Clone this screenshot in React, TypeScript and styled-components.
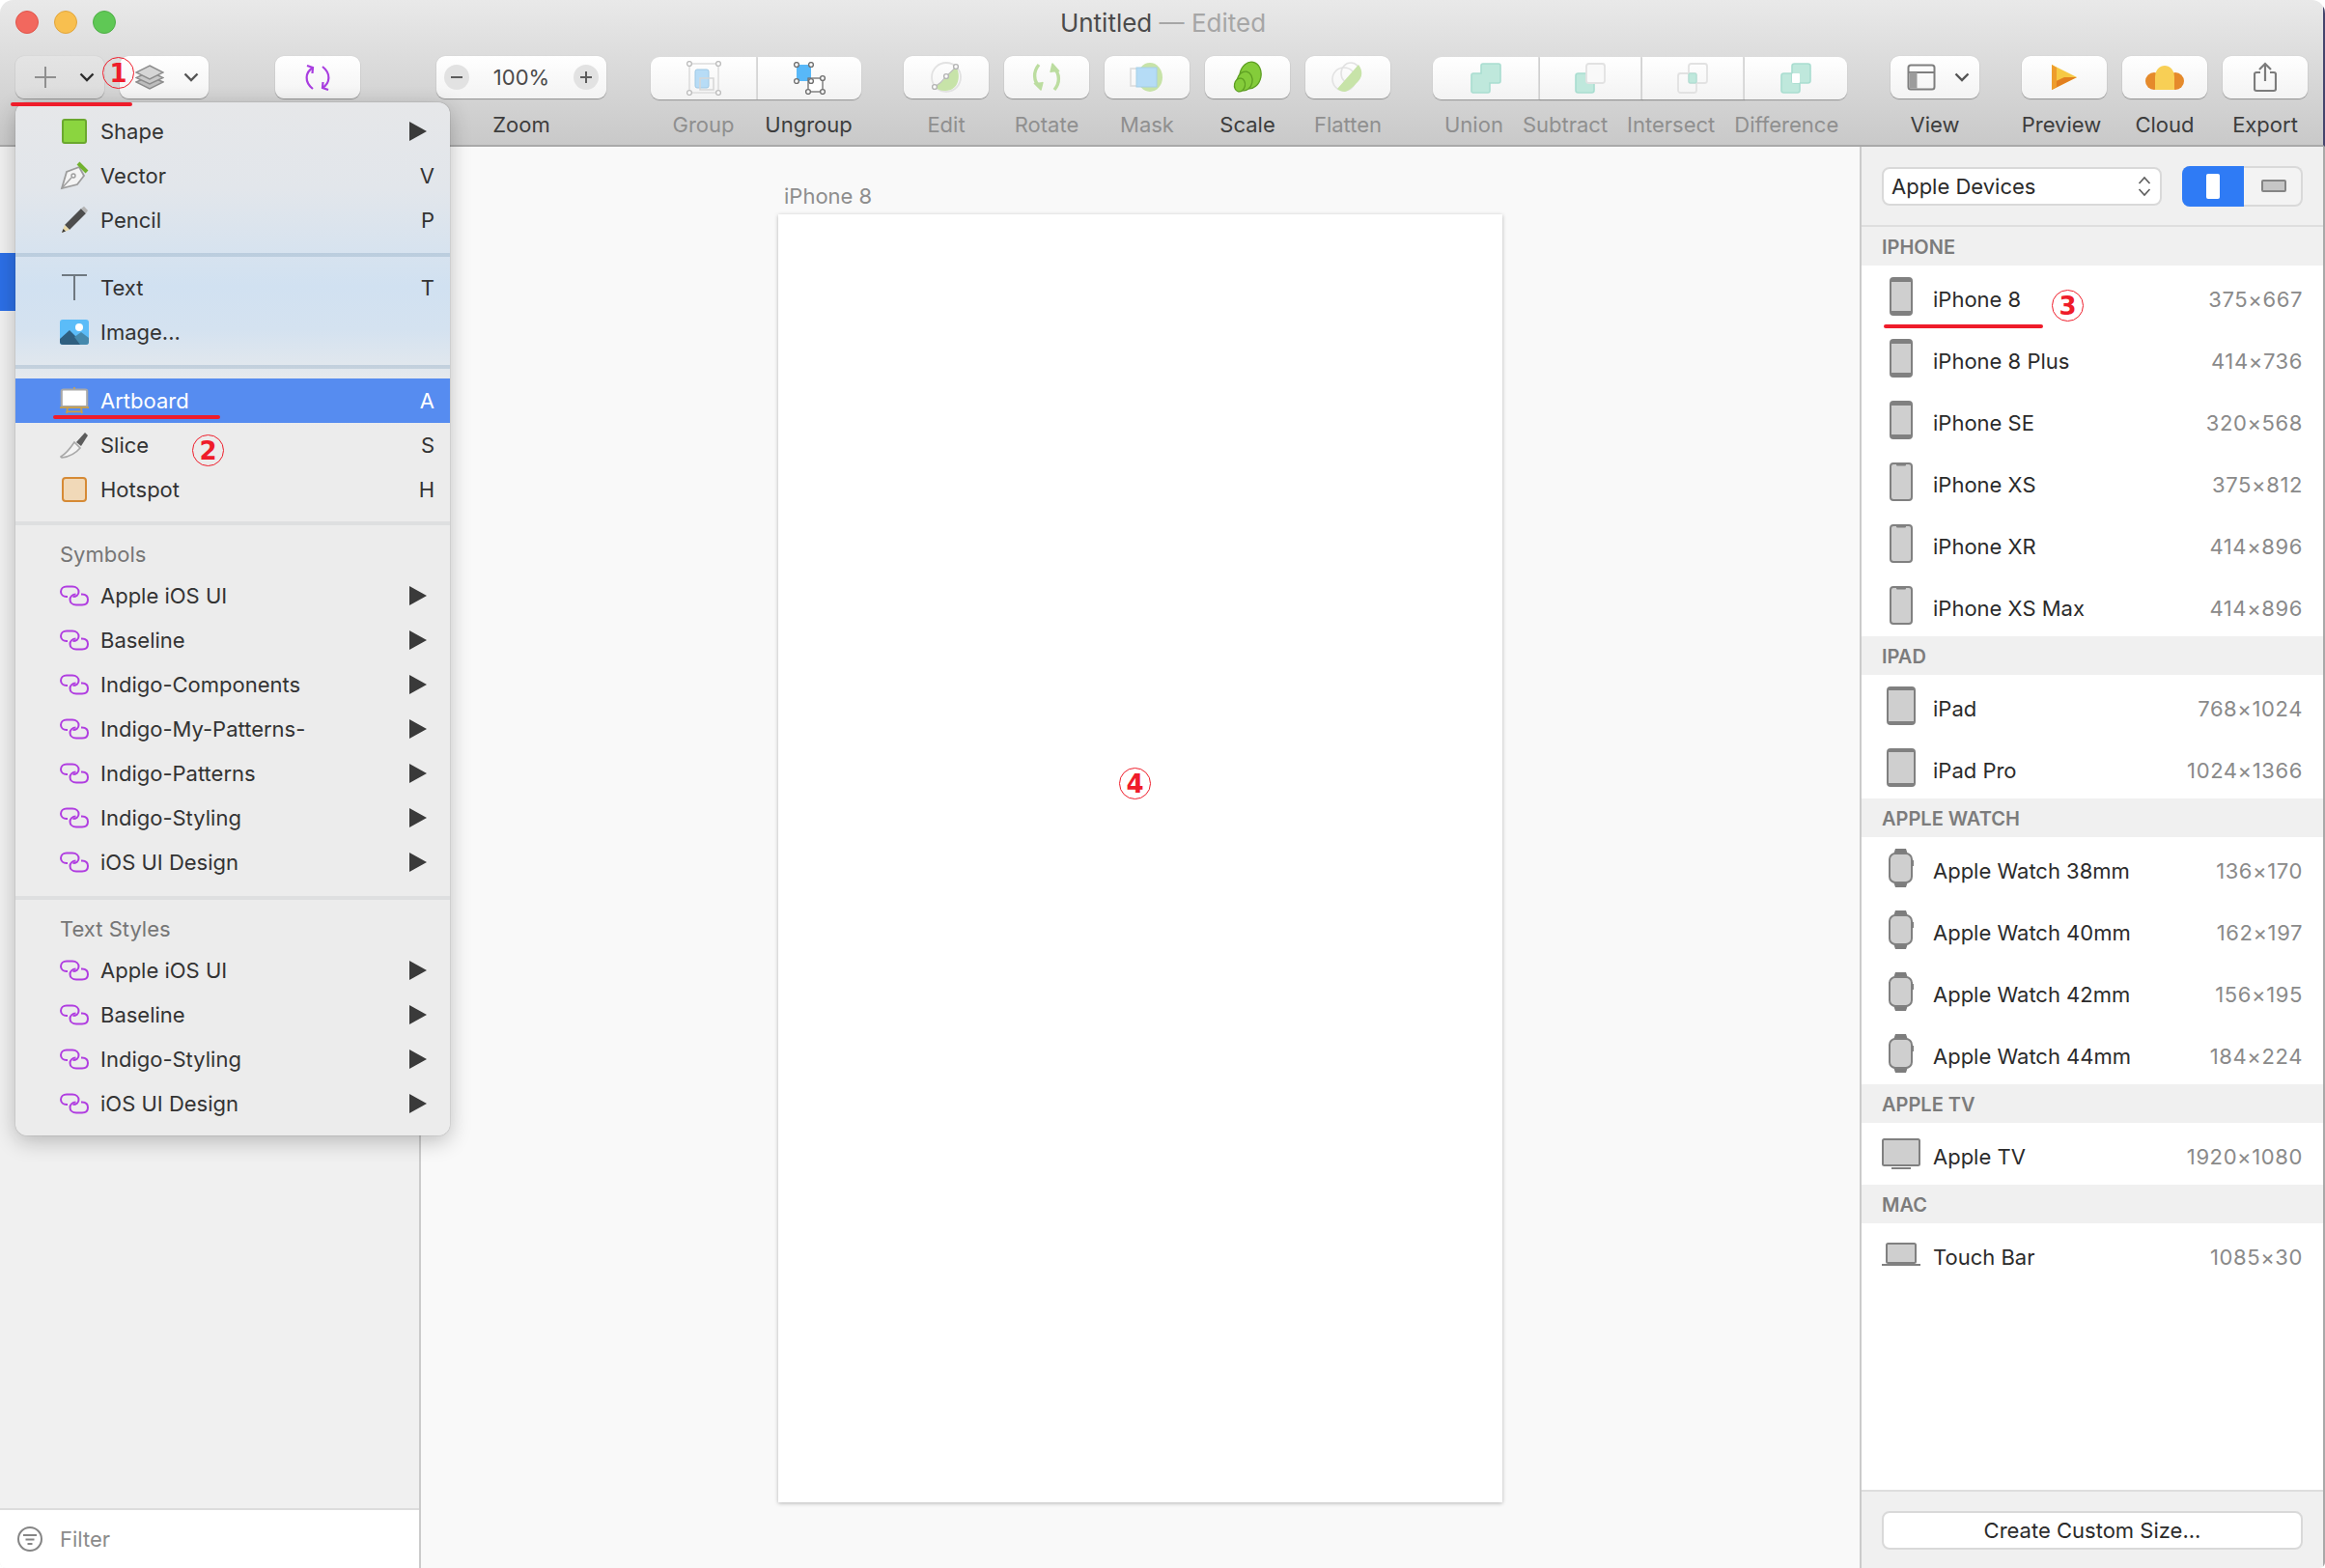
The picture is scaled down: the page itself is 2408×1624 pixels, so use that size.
import React from 'react';
import styled, { createGlobalStyle } from 'styled-components';

const FONT = `Inter, "Liberation Sans", sans-serif`;

const GlobalStyle = createGlobalStyle`
  html, body {
    margin: 0;
    padding: 0;
    background: #ffffff;
  }
  body {
    font-family: ${FONT};
    -webkit-font-smoothing: antialiased;
  }
`;

const Win = styled.div`
  position: relative;
  width: 2408px;
  height: 1624px;
  overflow: hidden;
  display: flex;
  flex-direction: column;
  border-radius: 14px 14px 6px 6px;
  background: #f9f9f9;
`;

const Toolbar = styled.header`
  height: 150px;
  flex-shrink: 0;
  border-bottom: 2px solid #a9a9a9;
  border-right: 2px solid #45456c;
  background: linear-gradient(180deg, #e9e9e9 0%, #c9c9c9 100%);
`;

const TitleBar = styled.div`
  height: 46px;
  padding: 0 16px;
  display: grid;
  grid-template-columns: 1fr auto 1fr;
  align-items: center;
`;

const Lights = styled.div`
  display: flex;
  gap: 16px;
`;

const Light = styled.span<{ $fill: string; $edge: string }>`
  width: 24px;
  height: 24px;
  border-radius: 50%;
  box-sizing: border-box;
  background: ${({ $fill }) => $fill};
  border: 1px solid ${({ $edge }) => $edge};
`;

const Title = styled.div`
  margin-left: 3px;
  font-size: 26px;
  color: #4b4b4b;
  white-space: nowrap;
`;

const TitleFaded = styled.span`
  color: #a6a6a6;
`;

const ToolRow = styled.div`
  display: flex;
  padding: 12px 16px 0;
`;

const Tool = styled.div<{ $w: number; $ml?: number }>`
  width: ${({ $w }) => $w}px;
  margin-left: ${({ $ml }) => $ml ?? 0}px;
  flex-shrink: 0;
  display: flex;
  flex-direction: column;
  align-items: center;
`;

const ToolButton = styled.div<{ $pressed?: boolean }>`
  width: 100%;
  height: 44px;
  border-radius: 9px;
  display: flex;
  align-items: center;
  justify-content: center;
  background: ${({ $pressed }) =>
    $pressed
      ? 'linear-gradient(180deg, #e4e4e4, #dcdcdc)'
      : 'linear-gradient(180deg, #ffffff, #f3f3f3)'};
  box-shadow: 0 1px 1px rgba(0, 0, 0, 0.3), 0 0 1px rgba(0, 0, 0, 0.18);
`;

const ComboButton = styled(ToolButton)<{ $pl: number }>`
  justify-content: space-between;
  box-sizing: border-box;
  padding: 0 10px 0 ${({ $pl }) => $pl}px;
`;

const ToolLabel = styled.div<{ $off?: boolean; $nudge?: number }>`
  margin-top: 14px;
  margin-right: ${({ $nudge }) => $nudge ?? 0}px;
  font-size: 22px;
  line-height: 26px;
  white-space: nowrap;
  color: ${({ $off }) => ($off ? '#8f8f8f' : '#3d3d3d')};
`;

const Segments = styled.div<{ $ml: number }>`
  margin-left: ${({ $ml }) => $ml}px;
  display: flex;
  flex-shrink: 0;
`;

const Segment = styled.div<{ $w: number }>`
  width: ${({ $w }) => $w}px;
  display: flex;
  flex-direction: column;
  align-items: center;
`;

const SegmentFace = styled.div<{ $first?: boolean; $last?: boolean; $w?: number }>`
  width: ${({ $w }) => ($w ? `${$w}px` : '100%')};
  height: 44px;
  box-sizing: border-box;
  margin-top: 1px;
  margin-bottom: -1px;
  display: flex;
  align-items: center;
  justify-content: center;
  background: linear-gradient(180deg, #ffffff, #f3f3f3);
  box-shadow: 0 1px 1px rgba(0, 0, 0, 0.3);
  border-right: ${({ $last }) => ($last ? 'none' : '2px solid #dcdcdc')};
  border-radius: ${({ $first, $last }) =>
    `${$first ? 9 : 0}px ${$last ? 9 : 0}px ${$last ? 9 : 0}px ${$first ? 9 : 0}px`};
`;

const BooleanGroup = styled.div`
  margin-left: 44px;
  flex-shrink: 0;
  width: 429px;
  display: flex;
  flex-direction: column;
`;

const BooleanFaces = styled.div`
  display: flex;
`;

const BooleanLabels = styled.div`
  display: flex;
  gap: 20px;
  padding-left: 12px;
`;

const ZoomFace = styled(ToolButton)`
  justify-content: space-between;
  padding: 0 8px;
  box-sizing: border-box;
  font-size: 22px;
  color: #4a4a4a;
`;

const ZoomKnob = styled.span`
  width: 26px;
  height: 26px;
  border-radius: 50%;
  background: #e2e2e2;
  color: #5c5c5c;
  display: flex;
  align-items: center;
  justify-content: center;
`;

const Body = styled.div`
  flex: 1;
  min-height: 0;
  display: flex;
`;

const Sidebar = styled.aside`
  width: 434px;
  flex-shrink: 0;
  display: flex;
  flex-direction: column;
  background: #f0f0f0;
  border-right: 2px solid #cbcbcb;
`;

const LayerList = styled.div`
  flex: 1;
  padding-top: 110px;
`;

const SelectedLayer = styled.div`
  height: 60px;
  background: #2c6fe6;
`;

const FilterBar = styled.div`
  height: 60px;
  border-top: 2px solid #dcdcdc;
  background: #ffffff;
  padding-left: 18px;
  display: flex;
  align-items: center;
  gap: 18px;
  font-size: 22px;
  color: #8b8b8b;
`;

const Canvas = styled.main`
  flex: 1;
  min-width: 0;
  padding: 38px 0 0 370px;
  background: #f9f9f9;
`;

const ArtboardLabel = styled.div`
  margin-left: 6px;
  height: 32px;
  font-size: 22px;
  line-height: 26px;
  color: #8e8e8e;
`;

const Artboard = styled.div`
  width: 750px;
  height: 1334px;
  background: #ffffff;
  box-shadow: 0 1px 4px rgba(0, 0, 0, 0.28);
`;

const Panel = styled.aside`
  width: 478px;
  flex-shrink: 0;
  display: flex;
  flex-direction: column;
  background: #f0f0f0;
  border-left: 2px solid #cbcbcb;
  border-right: 2px solid #a8a8a8;
`;

const PanelTop = styled.div`
  height: 81px;
  flex-shrink: 0;
  box-sizing: content-box;
  border-bottom: 2px solid #dedede;
  padding: 0 21px;
  display: flex;
  align-items: center;
  justify-content: space-between;
`;

const DeviceSelect = styled.div`
  width: 290px;
  height: 40px;
  box-sizing: border-box;
  padding: 1px 9px 0 8px;
  border: 2px solid #d9d9d9;
  border-radius: 8px;
  background: #ffffff;
  display: flex;
  align-items: center;
  justify-content: space-between;
  font-size: 22px;
  color: #2a2a2a;
`;

const Orientation = styled.div`
  width: 125px;
  height: 42px;
  display: flex;
  border-radius: 8px;
  background: #f3f3f3;
  box-shadow: inset 0 0 0 2px #d9d9d9;
`;

const OrientationCell = styled.div<{ $on?: boolean }>`
  flex: ${({ $on }) => ($on ? '0 0 64px' : 1)};
  border-radius: 8px 0 0 8px;
  background: ${({ $on }) => ($on ? '#2f7bf5' : 'transparent')};
  display: flex;
  align-items: center;
  justify-content: center;
`;

const PortraitMark = styled.span`
  width: 14px;
  height: 26px;
  border-radius: 2px;
  background: #ffffff;
`;

const LandscapeMark = styled.span`
  width: 26px;
  height: 13px;
  box-sizing: border-box;
  border-radius: 2px;
  background: #c6c6c6;
  border: 2px solid #858585;
`;

const DeviceList = styled.div`
  flex: 1;
  min-height: 0;
  background: #ffffff;
`;

const SectionHead = styled.div`
  height: 38px;
  padding: 2px 21px 0;
  background: #f0f0f0;
  display: flex;
  align-items: center;
  font-size: 20px;
  font-weight: 600;
  color: #7c7c7c;
`;

const DeviceRow = styled.div`
  height: 64px;
  padding: 0 21px;
  display: flex;
  align-items: center;
`;

const DeviceIcon = styled.span`
  width: 40px;
  margin-right: 13px;
  display: flex;
  justify-content: center;
`;

const DeviceName = styled.span`
  flex: 1;
  margin-top: 5px;
  font-size: 22px;
  color: #2b2b2b;
`;

const DeviceSize = styled.span`
  margin-top: 5px;
  font-size: 22px;
  letter-spacing: 0.6px;
  color: #8a8a8a;
`;

const PanelFooter = styled.div`
  height: 59px;
  flex-shrink: 0;
  border-top: 2px solid #dedede;
  padding: 20px 21px 0;
  box-sizing: content-box;
`;

const CustomButton = styled.div`
  height: 40px;
  box-sizing: border-box;
  border-radius: 8px;
  border: 2px solid #d9d9d9;
  background: #ffffff;
  display: flex;
  align-items: center;
  justify-content: center;
  font-size: 22px;
  color: #2b2b2b;
`;

const Menu = styled.nav`
  position: absolute;
  left: 16px;
  top: 106px;
  width: 450px;
  height: 1070px;
  box-sizing: border-box;
  padding-top: 7px;
  border-radius: 12px;
  background: linear-gradient(
    180deg,
    #e6e7e9 0,
    #e2e6eb 90px,
    #d1e1f1 190px,
    #d4e2f0 235px,
    #e5e9ed 285px,
    #ececec 340px,
    #ececec 100%
  );
  box-shadow: 0 0 1px rgba(0, 0, 0, 0.55), 0 6px 22px rgba(0, 0, 0, 0.24);
`;

const MenuRow = styled.div<{ $active?: boolean }>`
  height: 46px;
  padding: 0 16px 0 46px;
  display: flex;
  align-items: center;
  font-size: 22px;
  color: ${({ $active }) => ($active ? '#ffffff' : '#333333')};
  background: ${({ $active }) => ($active ? '#568cf0' : 'transparent')};
`;

const MenuIcon = styled.span`
  width: 30px;
  margin-right: 12px;
  display: flex;
  justify-content: center;
`;

const MenuText = styled.span`
  flex: 1;
`;

const MenuSeparator = styled.div<{ $before: number; $after: number; $tint?: boolean }>`
  height: 4px;
  margin: ${({ $before, $after }) => `${$before}px 0 ${$after}px`};
  background: ${({ $tint }) => ($tint ? 'rgba(120, 150, 180, 0.28)' : '#dedfe0')};
`;

const MenuHeading = styled.div`
  height: 40px;
  padding-left: 46px;
  display: flex;
  align-items: center;
  font-size: 22px;
  color: #767676;
`;

const Arrow = styled.span`
  width: 0;
  height: 0;
  margin-right: 8px;
  border-left: 18px solid #3a3a3a;
  border-top: 10px solid transparent;
  border-bottom: 10px solid transparent;
`;

const RedLine = styled.div<{ $x: number; $y: number; $w: number }>`
  position: absolute;
  left: ${({ $x }) => $x}px;
  top: ${({ $y }) => $y}px;
  width: ${({ $w }) => $w}px;
  height: 4px;
  border-radius: 2px;
  background: #ef1c2a;
`;

const Badge = styled.div<{ $x: number; $y: number }>`
  position: absolute;
  left: ${({ $x }) => $x - 16}px;
  top: ${({ $y }) => $y - 16}px;
  width: 33px;
  height: 33px;
  box-sizing: border-box;
  border: 1px solid #ef1c2a;
  border-radius: 50%;
  display: flex;
  align-items: center;
  justify-content: center;
  font-family: "DejaVu Sans", sans-serif;
  font-weight: 700;
  font-size: 26px;
  line-height: 1;
  color: #ef1c2a;
`;

const Chevron = ({ color = '#3a3a3a' }: { color?: string }) => (
  <svg width="16" height="10" viewBox="0 0 16 10" fill="none">
    <path d="M1.5 1.5 8 8l6.5-6.5" stroke={color} strokeWidth="2.4" />
  </svg>
);

const PlusIcon = () => (
  <svg width="24" height="24" viewBox="0 0 24 24">
    <path d="M12 1v22M1 12h22" stroke="#8f8f8f" strokeWidth="2" />
  </svg>
);

const LayersIcon = () => (
  <svg width="30" height="26" viewBox="0 0 30 26" fill="#d6d6d6" stroke="#8d8d8d" strokeWidth="1.5">
    <path d="M15 12 29 18 15 25 1 18Z" fill="#bdbdbd" />
    <path d="M15 7 29 13.5 15 20 1 13.5Z" fill="#c9c9c9" />
    <path d="M15 1 29 8 15 15 1 8Z" />
  </svg>
);

const SyncIcon = () => (
  <svg width="28" height="27" viewBox="0 0 28 27" fill="none" stroke="#a93ee0" strokeWidth="2.2">
    <path d="M9 3C1 8 0 18 9 25" />
    <path d="M3 1 9 3 8.500 9" />
    <path d="M19 24C27 19 28 9 19 2" />
    <path d="M25 26 19 24 19.500 18" />
  </svg>
);

const Handles = ({ points, color }: { points: number[][]; color: string }) => (
  <>
    {points.map(([cx, cy]) => (
      <circle key={`${cx}-${cy}`} cx={cx} cy={cy} r="2.4" fill="#ffffff" stroke={color} strokeWidth="1.4" />
    ))}
  </>
);

const GroupIcon = () => (
  <svg width="36" height="36" viewBox="0 0 36 36" fill="none">
    <rect x="3" y="3" width="30" height="30" stroke="#dcdcdc" strokeWidth="1.5" />
    <rect x="9" y="9" width="14" height="19" rx="2" fill="#b7dcf6" stroke="#9ec8e4" />
    <rect x="14" y="18" width="14" height="12" stroke="#d6d6d6" strokeWidth="1.5" />
    <Handles points={[[3, 3], [33, 3], [3, 33], [33, 33]]} color="#bdbdbd" />
  </svg>
);

const UngroupIcon = () => (
  <svg width="34" height="34" viewBox="0 0 34 34" fill="none">
    <rect x="3" y="3" width="15" height="17" rx="2" fill="#58b8f8" />
    <rect x="15" y="17" width="15" height="14" fill="#ffffff" stroke="#6f6f6f" strokeWidth="1.3" />
    <Handles points={[[3, 3], [18, 3], [3, 20], [18, 20], [30, 17], [15, 31], [30, 31]]} color="#6f6f6f" />
  </svg>
);

const EditIcon = () => (
  <svg width="34" height="32" viewBox="0 0 34 32" fill="none">
    <ellipse cx="17" cy="16" rx="15" ry="15" stroke="#e2e2e2" strokeWidth="1.8" />
    <path d="M27 5C33 14 30 31 15 30 11 30 7 28 5 26 11 22 15 19 17 15Z" fill="#c7e3a8" />
    <path d="M5 26C10 23 14 19 17 15 21 11 25 8 27 5" stroke="#bcbcbc" strokeWidth="1.2" />
    <Handles points={[[27, 5], [17, 15], [5, 26]]} color="#b4b4b4" />
  </svg>
);

const RotateIcon = () => (
  <svg width="32" height="32" viewBox="0 0 32 32" fill="none" stroke="#bcdda0" strokeWidth="3.4" strokeLinejoin="round">
    <path d="M8 3C2 10 2 20 9 26" />
    <path d="M3 22 10 29 12 21" fill="#bcdda0" strokeWidth="1.5" />
    <path d="M24 29C30 22 30 12 23 6" />
    <path d="M29 10 22 2 20 11" fill="#bcdda0" strokeWidth="1.5" />
  </svg>
);

const MaskIcon = () => (
  <svg width="36" height="32" viewBox="0 0 36 32" fill="none">
    <rect x="1" y="7" width="23" height="18" stroke="#dddddd" strokeWidth="1.6" />
    <ellipse cx="21" cy="16" rx="13" ry="15" fill="#c7e3a8" />
    <rect x="7" y="6" width="21" height="20" fill="#b5dcf6" stroke="#a6cfe6" />
  </svg>
);

const ScaleIcon = () => (
  <svg width="32" height="34" viewBox="0 0 32 34" fill="#84cc3a" stroke="#5d9e22" strokeWidth="1.3">
    <ellipse cx="19" cy="15" rx="11" ry="14" transform="rotate(12 19 15)" />
    <ellipse cx="13" cy="21" rx="8" ry="10" transform="rotate(12 13 21)" />
    <ellipse cx="8" cy="25" rx="5.5" ry="7" transform="rotate(12 8 25)" />
  </svg>
);

const FlattenIcon = () => (
  <svg width="34" height="32" viewBox="0 0 34 32" fill="none">
    <circle cx="13" cy="18" r="12" stroke="#e2e2e2" strokeWidth="1.6" />
    <ellipse cx="20" cy="12" rx="10" ry="11" stroke="#e2e2e2" strokeWidth="1.6" />
    <path d="M28 3C33 10 32 16 27 21 23 25 20 29 14 31 11 31 8 30 6 28Z" fill="#c7e3a8" />
  </svg>
);

const TEAL = '#bfe8dc';
const TEAL_EDGE = '#a9ddd0';
const GHOST = '#e2e2e2';

const UnionIcon = () => (
  <svg width="32" height="32" viewBox="0 0 32 32">
    <path d="M13 1h16a2 2 0 0 1 2 2v16a2 2 0 0 1-2 2H20v8a2 2 0 0 1-2 2H3a2 2 0 0 1-2-2V13a2 2 0 0 1 2-2h8V3a2 2 0 0 1 2-2Z" fill={TEAL} stroke={TEAL_EDGE} strokeWidth="1.6" />
  </svg>
);

const SubtractIcon = () => (
  <svg width="32" height="32" viewBox="0 0 32 32">
    <rect x="1" y="11" width="19" height="20" rx="2.5" fill={TEAL} stroke={TEAL_EDGE} strokeWidth="1.6" />
    <rect x="12" y="1" width="19" height="20" rx="2.5" fill="#f9f9f9" stroke={GHOST} strokeWidth="1.8" />
  </svg>
);

const IntersectIcon = () => (
  <svg width="32" height="32" viewBox="0 0 32 32" fill="none">
    <rect x="1" y="11" width="19" height="20" rx="2.5" stroke={GHOST} strokeWidth="1.8" />
    <rect x="12" y="1" width="19" height="20" rx="2.5" stroke={GHOST} strokeWidth="1.8" />
    <rect x="12" y="11" width="8" height="10" rx="1" fill={TEAL} stroke={TEAL_EDGE} />
  </svg>
);

const DifferenceIcon = () => (
  <svg width="32" height="32" viewBox="0 0 32 32">
    <rect x="1" y="11" width="19" height="20" rx="2.5" fill={TEAL} stroke={TEAL_EDGE} strokeWidth="1.6" />
    <rect x="12" y="1" width="19" height="20" rx="2.5" fill={TEAL} stroke={TEAL_EDGE} strokeWidth="1.6" />
    <rect x="12" y="11" width="8" height="10" rx="1" fill="#ffffff" />
  </svg>
);

const ViewIcon = () => (
  <svg width="30" height="28" viewBox="0 0 30 28" fill="none">
    <rect x="1.5" y="1.5" width="27" height="25" rx="2.5" stroke="#7f7f7f" strokeWidth="2" />
    <path d="M2 9h26" stroke="#7f7f7f" strokeWidth="2" />
    <rect x="2.5" y="9" width="8" height="16.5" fill="#9c9c9c" />
  </svg>
);

const PreviewIcon = () => (
  <svg width="28" height="28" viewBox="0 0 28 28">
    <path d="M1 1 27 14 1 27Z" fill="#f6c944" />
    <path d="M1 27 27 14H14L1 20Z" fill="#e27f1f" />
    <path d="M1 1 6 4V24L1 27Z" fill="#ee9d2d" />
  </svg>
);

const CloudIcon = () => (
  <svg width="40" height="26" viewBox="0 0 40 26">
    <ellipse cx="9" cy="17" rx="9" ry="9" fill="#e58a2b" />
    <ellipse cx="31" cy="17" rx="9" ry="9" fill="#e58a2b" />
    <path d="M10 26V13C10 5 15 1 20 1s10 4 10 12v13Z" fill="#f8cf55" />
  </svg>
);

const ExportIcon = () => (
  <svg width="24" height="32" viewBox="0 0 24 32" fill="none" stroke="#7c7c7c" strokeWidth="2.2">
    <path d="M7 11H3a2 2 0 0 0-2 2v15a2 2 0 0 0 2 2h18a2 2 0 0 0 2-2V13a2 2 0 0 0-2-2h-4" />
    <path d="M12 20V2M6 8l6-6 6 6" />
  </svg>
);

const ShapeGlyph = () => (
  <svg width="26" height="26" viewBox="0 0 26 26">
    <rect x="1" y="1" width="24" height="24" rx="2" fill="#8bd53f" stroke="#6ba82e" strokeWidth="2" />
  </svg>
);

const PenGlyph = () => (
  <svg width="30" height="30" viewBox="0 0 30 30" fill="none">
    <path d="M2 28 7 11 20 6 25 15 18 24Z" fill="#f4f4f4" stroke="#9d9d9d" strokeWidth="1.8" />
    <path d="M2 28 12 17" stroke="#9d9d9d" strokeWidth="1.4" />
    <circle cx="14" cy="15" r="2" stroke="#9d9d9d" strokeWidth="1.4" />
    <path d="M19 2 28 11" stroke="#71b22e" strokeWidth="4" />
  </svg>
);

const PencilGlyph = () => (
  <svg width="30" height="30" viewBox="0 0 30 30" fill="none">
    <path d="M5 20 22 3l5 5L10 25Z" fill="#4d4d4d" />
    <path d="M22 3 25 0.8 29 5 27 8Z" fill="#b3b3b3" />
    <path d="M5 20 10 25 2 28Z" fill="#e8d8a8" />
    <path d="M2 28 3.5 24 6 26.5Z" fill="#3a3a3a" />
  </svg>
);

const TextGlyph = () => (
  <svg width="28" height="28" viewBox="0 0 28 28">
    <path d="M1 1h26M14 1v26" stroke="#6f7880" strokeWidth="2" />
  </svg>
);

const ImageGlyph = () => (
  <svg width="30" height="26" viewBox="0 0 30 26">
    <rect width="30" height="26" rx="3" fill="#5bbcf8" />
    <circle cx="20" cy="8" r="4" fill="#ffffff" />
    <path d="M0 23V20L10 11 21 22 23 26H3a3 3 0 0 1-3-3Z" fill="#2f5f80" />
    <path d="M15 18 22 13 30 19V23a3 3 0 0 1-3 3H21Z" fill="#4589ad" />
  </svg>
);

const ArtboardGlyph = () => (
  <svg width="34" height="32" viewBox="0 0 34 32" fill="none">
    <path d="M17 0v3" stroke="#c9a04a" strokeWidth="2" />
    <rect x="2" y="3" width="30" height="20" rx="2" fill="#ffffff" stroke="#a8a8a8" strokeWidth="2.4" />
    <path d="M0 24h34" stroke="#c9a04a" strokeWidth="2" />
    <path d="M9 24 8 31M25 24l1 7M8 29h18" stroke="#c9a04a" strokeWidth="2" />
  </svg>
);

const SliceGlyph = () => (
  <svg width="30" height="28" viewBox="0 0 30 28">
    <path d="M2 27C10 26 16 23 21 17L15 11C11 17 6 23 1 26Z" fill="#f4f4f4" stroke="#a8a8a8" strokeWidth="1.6" />
    <path d="M17 11 26 1 29 4 22 15Z" fill="#5c5c5c" />
  </svg>
);

const HotspotGlyph = () => (
  <svg width="26" height="26" viewBox="0 0 26 26">
    <rect x="1" y="1" width="24" height="24" rx="3" fill="#f1d9b8" stroke="#d68a35" strokeWidth="2" />
  </svg>
);

const LinkGlyph = () => (
  <svg width="30" height="22" viewBox="0 0 30 22" fill="none" stroke="#b03de0" strokeWidth="2">
    <path d="M8 12H7C3.500 12 1 10 1 6.800 1 3.500 3.500 1.500 7 1.500H13C17 1.500 19.500 4 19.500 7 19.500 10 17 12 13.500 12" />
    <path d="M22 9.500H23C27 9.500 29 12 29 15 29 18 27 20.500 23 20.500H17C13 20.500 10.500 18 10.500 15 10.500 12 13 9.500 16.500 9.500" />
  </svg>
);

const SmallPhone = ({ notch, thick = true }: { notch?: boolean; thick?: boolean }) => (
  <svg width="24" height="40" viewBox="0 0 24 40">
    <rect x="1" y="1" width="22" height="38" rx="3" fill="#cfcfcf" stroke="#808080" strokeWidth="2" />
    {thick && <path d="M1 3.500h22M1 36.500h22" stroke="#808080" strokeWidth="3" />}
    {notch && <path d="M7 1h10v1.500a1 1 0 0 1-1 1H8a1 1 0 0 1-1-1Z" fill="#808080" />}
  </svg>
);

const TabletIcon = () => (
  <svg width="30" height="40" viewBox="0 0 30 40">
    <rect x="1" y="1" width="28" height="38" rx="3" fill="#cfcfcf" stroke="#808080" strokeWidth="2" />
    <path d="M1 3h28M1 37h28" stroke="#808080" strokeWidth="2" />
  </svg>
);

const WatchIcon = () => (
  <svg width="26" height="40" viewBox="0 0 26 40">
    <path d="M5 6 7 0H18L20 6ZM5 34 7 40H18L20 34Z" fill="#7d7d7d" />
    <rect x="1" y="5" width="23" height="30" rx="6" fill="#cfcfcf" stroke="#808080" strokeWidth="2" />
    <rect x="24" y="12" width="2" height="6" fill="#808080" />
  </svg>
);

const TvIcon = () => (
  <svg width="40" height="32" viewBox="0 0 40 32">
    <rect x="1" y="1" width="38" height="27" rx="1.5" fill="#cfcfcf" stroke="#808080" strokeWidth="2" />
    <path d="M10 31h20" stroke="#808080" strokeWidth="2" />
  </svg>
);

const LaptopIcon = () => (
  <svg width="40" height="24" viewBox="0 0 40 24">
    <rect x="5" y="1" width="30" height="20" rx="1.500" fill="#cfcfcf" stroke="#808080" strokeWidth="2" />
    <path d="M0 23h40" stroke="#808080" strokeWidth="2" />
  </svg>
);

const FilterIcon = () => (
  <svg width="26" height="26" viewBox="0 0 26 26" fill="none" stroke="#858585" strokeWidth="2">
    <circle cx="13" cy="13" r="12" />
    <path d="M6 9h14M8.500 13.500h9M10.500 18h5" />
  </svg>
);

const SelectArrows = () => (
  <svg width="14" height="22" viewBox="0 0 14 22" fill="none" stroke="#5c5c5c" strokeWidth="1.6">
    <path d="M1.500 8 7 2l5.500 6M1.500 14 7 20l5.500-6" />
  </svg>
);

type MenuEntry = { label: string; icon?: React.ReactNode; key?: string; more?: boolean; active?: boolean };

const drawTools: MenuEntry[] = [
  { label: 'Shape', icon: <ShapeGlyph />, more: true },
  { label: 'Vector', icon: <PenGlyph />, key: 'V' },
  { label: 'Pencil', icon: <PencilGlyph />, key: 'P' },
];

const textTools: MenuEntry[] = [
  { label: 'Text', icon: <TextGlyph />, key: 'T' },
  { label: 'Image...', icon: <ImageGlyph /> },
];

const pageTools: MenuEntry[] = [
  { label: 'Artboard', icon: <ArtboardGlyph />, key: 'A', active: true },
  { label: 'Slice', icon: <SliceGlyph />, key: 'S' },
  { label: 'Hotspot', icon: <HotspotGlyph />, key: 'H' },
];

const symbolLibs = ['Apple iOS UI', 'Baseline', 'Indigo-Components', 'Indigo-My-Patterns-', 'Indigo-Patterns', 'Indigo-Styling', 'iOS UI Design'];
const styleLibs = ['Apple iOS UI', 'Baseline', 'Indigo-Styling', 'iOS UI Design'];

const MenuRows = ({ items }: { items: MenuEntry[] }) => (
  <>
    {items.map((item) => (
      <MenuRow key={item.label} $active={item.active}>
        <MenuIcon>{item.icon}</MenuIcon>
        <MenuText>{item.label}</MenuText>
        {item.key}
        {item.more && <Arrow />}
      </MenuRow>
    ))}
  </>
);

const LibraryRows = ({ names }: { names: string[] }) => (
  <MenuRows items={names.map((label) => ({ label, icon: <LinkGlyph />, more: true }))} />
);

type Device = { name: string; size: string; icon: React.ReactNode };
type DeviceGroup = { title: string; devices: Device[] };

const deviceGroups: DeviceGroup[] = [
  {
    title: 'IPHONE',
    devices: [
      { name: 'iPhone 8', size: '375×667', icon: <SmallPhone /> },
      { name: 'iPhone 8 Plus', size: '414×736', icon: <SmallPhone /> },
      { name: 'iPhone SE', size: '320×568', icon: <SmallPhone /> },
      { name: 'iPhone XS', size: '375×812', icon: <SmallPhone notch thick={false} /> },
      { name: 'iPhone XR', size: '414×896', icon: <SmallPhone notch thick={false} /> },
      { name: 'iPhone XS Max', size: '414×896', icon: <SmallPhone notch thick={false} /> },
    ],
  },
  {
    title: 'IPAD',
    devices: [
      { name: 'iPad', size: '768×1024', icon: <TabletIcon /> },
      { name: 'iPad Pro', size: '1024×1366', icon: <TabletIcon /> },
    ],
  },
  {
    title: 'APPLE WATCH',
    devices: [
      { name: 'Apple Watch 38mm', size: '136×170', icon: <WatchIcon /> },
      { name: 'Apple Watch 40mm', size: '162×197', icon: <WatchIcon /> },
      { name: 'Apple Watch 42mm', size: '156×195', icon: <WatchIcon /> },
      { name: 'Apple Watch 44mm', size: '184×224', icon: <WatchIcon /> },
    ],
  },
  { title: 'APPLE TV', devices: [{ name: 'Apple TV', size: '1920×1080', icon: <TvIcon /> }] },
  { title: 'MAC', devices: [{ name: 'Touch Bar', size: '1085×30', icon: <LaptopIcon /> }] },
];

const App: React.FC = () => (
  <Win>
    <GlobalStyle />
    <Toolbar>
      <TitleBar>
        <Lights>
          <Light $fill="#f2685e" $edge="#e0544a" />
          <Light $fill="#f8bf4f" $edge="#e0a53c" />
          <Light $fill="#5fc855" $edge="#4fae47" />
        </Lights>
        <Title>
          Untitled <TitleFaded>— Edited</TitleFaded>
        </Title>
      </TitleBar>
      <ToolRow>
        <Tool $w={92}>
          <ComboButton $pressed $pl={19}>
            <PlusIcon />
            <Chevron color="#2d2d2d" />
          </ComboButton>
        </Tool>
        <Tool $w={92} $ml={16}>
          <ComboButton $pl={16}>
            <LayersIcon />
            <Chevron color="#555555" />
          </ComboButton>
        </Tool>
        <Tool $w={88} $ml={69}>
          <ToolButton>
            <SyncIcon />
          </ToolButton>
        </Tool>
        <Tool $w={176} $ml={79}>
          <ZoomFace>
            <ZoomKnob>
              <svg width="14" height="14" viewBox="0 0 14 14"><path d="M1 7h12" stroke="#5c5c5c" strokeWidth="2" /></svg>
            </ZoomKnob>
            100%
            <ZoomKnob>
              <svg width="14" height="14" viewBox="0 0 14 14"><path d="M1 7h12M7 1v12" stroke="#5c5c5c" strokeWidth="2" /></svg>
            </ZoomKnob>
          </ZoomFace>
          <ToolLabel>Zoom</ToolLabel>
        </Tool>
        <Segments $ml={46}>
          <Segment $w={111}>
            <SegmentFace $first><GroupIcon /></SegmentFace>
            <ToolLabel $off $nudge={2}>Group</ToolLabel>
          </Segment>
          <Segment $w={107}>
            <SegmentFace $last><UngroupIcon /></SegmentFace>
            <ToolLabel $nudge={2}>Ungroup</ToolLabel>
          </Segment>
        </Segments>
        <Tool $w={88} $ml={44}>
          <ToolButton><EditIcon /></ToolButton>
          <ToolLabel $off>Edit</ToolLabel>
        </Tool>
        <Tool $w={88} $ml={16}>
          <ToolButton><RotateIcon /></ToolButton>
          <ToolLabel $off>Rotate</ToolLabel>
        </Tool>
        <Tool $w={88} $ml={16}>
          <ToolButton><MaskIcon /></ToolButton>
          <ToolLabel $off>Mask</ToolLabel>
        </Tool>
        <Tool $w={88} $ml={16}>
          <ToolButton><ScaleIcon /></ToolButton>
          <ToolLabel>Scale</ToolLabel>
        </Tool>
        <Tool $w={88} $ml={16}>
          <ToolButton><FlattenIcon /></ToolButton>
          <ToolLabel $off>Flatten</ToolLabel>
        </Tool>
        <BooleanGroup>
          <BooleanFaces>
            <SegmentFace $first $w={111}><UnionIcon /></SegmentFace>
            <SegmentFace $w={106}><SubtractIcon /></SegmentFace>
            <SegmentFace $w={106}><IntersectIcon /></SegmentFace>
            <SegmentFace $last $w={106}><DifferenceIcon /></SegmentFace>
          </BooleanFaces>
          <BooleanLabels>
            <ToolLabel $off>Union</ToolLabel>
            <ToolLabel $off>Subtract</ToolLabel>
            <ToolLabel $off>Intersect</ToolLabel>
            <ToolLabel $off>Difference</ToolLabel>
          </BooleanLabels>
        </BooleanGroup>
        <Tool $w={92} $ml={45}>
          <ComboButton $pl={17}>
            <ViewIcon />
            <Chevron color="#555555" />
          </ComboButton>
          <ToolLabel>View</ToolLabel>
        </Tool>
        <Tool $w={88} $ml={44}>
          <ToolButton><PreviewIcon /></ToolButton>
          <ToolLabel $nudge={6}>Preview</ToolLabel>
        </Tool>
        <Tool $w={88} $ml={16}>
          <ToolButton><CloudIcon /></ToolButton>
          <ToolLabel>Cloud</ToolLabel>
        </Tool>
        <Tool $w={88} $ml={16}>
          <ToolButton><ExportIcon /></ToolButton>
          <ToolLabel>Export</ToolLabel>
        </Tool>
      </ToolRow>
    </Toolbar>

    <Body>
      <Sidebar>
        <LayerList>
          <SelectedLayer />
        </LayerList>
        <FilterBar>
          <FilterIcon />
          Filter
        </FilterBar>
      </Sidebar>

      <Canvas>
        <ArtboardLabel>iPhone 8</ArtboardLabel>
        <Artboard />
      </Canvas>

      <Panel>
        <PanelTop>
          <DeviceSelect>
            Apple Devices
            <SelectArrows />
          </DeviceSelect>
          <Orientation>
            <OrientationCell $on><PortraitMark /></OrientationCell>
            <OrientationCell><LandscapeMark /></OrientationCell>
          </Orientation>
        </PanelTop>
        <DeviceList>
          {deviceGroups.map((group) => (
            <React.Fragment key={group.title}>
              <SectionHead>{group.title}</SectionHead>
              {group.devices.map((device) => (
                <DeviceRow key={device.name}>
                  <DeviceIcon>{device.icon}</DeviceIcon>
                  <DeviceName>{device.name}</DeviceName>
                  <DeviceSize>{device.size}</DeviceSize>
                </DeviceRow>
              ))}
            </React.Fragment>
          ))}
        </DeviceList>
        <PanelFooter>
          <CustomButton>Create Custom Size...</CustomButton>
        </PanelFooter>
      </Panel>
    </Body>

    <Menu>
      <MenuRows items={drawTools} />
      <MenuSeparator $before={11} $after={9} $tint />
      <MenuRows items={textTools} />
      <MenuSeparator $before={11} $after={10} $tint />
      <MenuRows items={pageTools} />
      <MenuSeparator $before={10} $after={10} />
      <MenuHeading>Symbols</MenuHeading>
      <LibraryRows names={symbolLibs} />
      <MenuSeparator $before={12} $after={10} />
      <MenuHeading>Text Styles</MenuHeading>
      <LibraryRows names={styleLibs} />
    </Menu>

    <RedLine $x={11} $y={106} $w={126} />
    <RedLine $x={55} $y={430} $w={173} />
    <RedLine $x={1951} $y={336} $w={165} />
    <Badge $x={122} $y={75}>1</Badge>
    <Badge $x={215} $y={466}>2</Badge>
    <Badge $x={2141} $y={316}>3</Badge>
    <Badge $x={1175} $y={811}>4</Badge>
  </Win>
);

export default App;
